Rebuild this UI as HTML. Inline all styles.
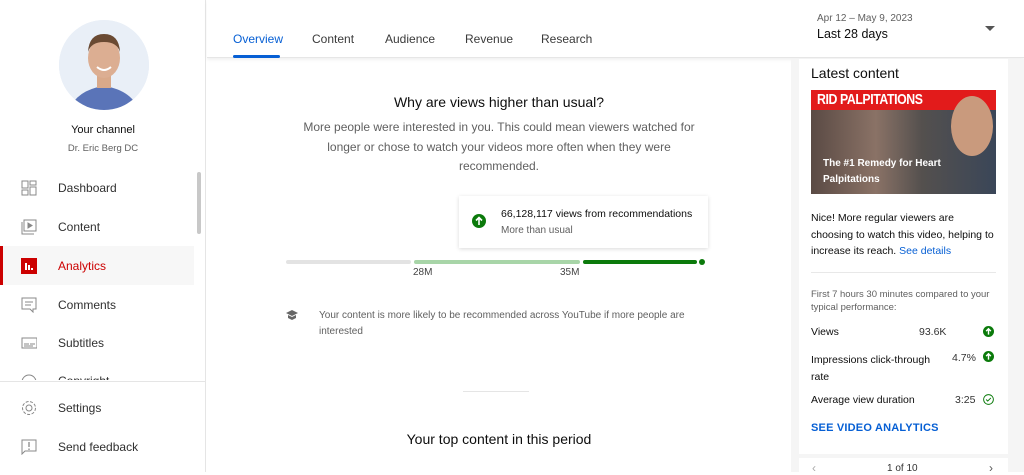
<!DOCTYPE html>
<html><head><style>
*{box-sizing:border-box;margin:0;padding:0}
body{width:1024px;height:472px;overflow:hidden;background:#fff;font-family:"Liberation Sans",Roboto,sans-serif;color:#0d0d0d;position:relative}
.side{position:absolute;left:0;top:0;width:206px;height:472px;border-right:1px solid #e5e5e5;background:#fff}
.av{position:absolute;left:59px;top:20px;width:90px;height:90px;border-radius:50%;background:#e8eef6;overflow:hidden}
.nav{position:absolute;left:0;width:194px;height:39px;display:flex;align-items:center;font-size:12px;color:#303030}
.nav .ic{position:absolute;left:21px;top:12px;width:16px;height:16px}
.nav span{position:absolute;left:58px}
.tabs{position:absolute;left:207px;top:0;width:817px;height:58px;border-bottom:1px solid #e6e6e6;box-shadow:0 2px 3px rgba(0,0,0,.06);background:#fff}
.tab{position:absolute;top:32px;font-size:12px;color:#3a3a3a}
.right{position:absolute;left:791px;top:59px;width:233px;height:413px;background:#f5f5f5}
.card{position:absolute;left:799px;top:59px;width:209px;height:395px;background:#fff}
.c{position:absolute;font-size:11px;color:#0d0d0d}
</style></head><body>
<div class="side">
 <div class="av"><svg width="90" height="90"><rect width="90" height="90" fill="#e9eff7"/><path d="M10 90 Q18 70 45 66 Q72 70 80 90Z" fill="#5a74b8"/><rect x="38" y="52" width="14" height="16" fill="#d9a98a"/><ellipse cx="45" cy="38" rx="16" ry="20" fill="#dcae92"/><path d="M29 32 Q30 14 45 14 Q60 14 61 32 Q58 22 45 22 Q32 22 29 32Z" fill="#6a4a33"/><path d="M38 47 Q45 53 52 47" stroke="#fff" stroke-width="2" fill="none"/></svg></div>
 <div style="position:absolute;top:124px;width:206px;text-align:center;font-size:11px;color:#0d0d0d">Your channel</div>
 <div style="position:absolute;top:143px;width:206px;text-align:center;font-size:9.5px;color:#606060">Dr. Eric Berg DC</div>
 <div style="position:absolute;left:197px;top:172px;width:4px;height:62px;border-radius:2px;background:#c8c8c8"></div>
 <div class="nav" style="top:168px"><svg class="ic" viewBox="0 0 16 16" fill="none" stroke="#888"><rect x="1" y="1" width="6" height="7"/><rect x="9" y="1" width="6" height="4"/><rect x="1" y="10" width="6" height="5"/><rect x="9" y="7" width="6" height="8"/></svg><span>Dashboard</span></div>
 <div class="nav" style="top:207px"><svg class="ic" viewBox="0 0 16 16" fill="none" stroke="#888"><rect x="3" y="1" width="12" height="11"/><path d="M1 3v12h12"/><path d="M7 4l4 2.5L7 9z" fill="#888"/></svg><span>Content</span></div>
 <div class="nav" style="top:246px;background:#f7f7f7;"><div style="position:absolute;left:0;top:0;width:3px;height:39px;background:#cc0000"></div><svg class="ic" viewBox="0 0 16 16"><rect width="16" height="16" fill="#cc0000"/><rect x="4" y="5" width="2" height="7" fill="#fff"/><rect x="7" y="7" width="2" height="5" fill="#fff"/><rect x="10" y="10" width="2" height="2" fill="#fff"/></svg><span style="color:#cc0000">Analytics</span></div>
 <div class="nav" style="top:285px"><svg class="ic" viewBox="0 0 16 16" fill="none" stroke="#888"><path d="M1 1h14v11H12v3l-3-3H1z"/><path d="M4 5h8M4 8h6"/></svg><span>Comments</span></div>
 <div class="nav" style="top:323px"><svg class="ic" viewBox="0 0 16 16" fill="none" stroke="#888"><rect x="1" y="3" width="15" height="10"/><path d="M3 9h5M9 9h5M3 11h9"/></svg><span>Subtitles</span></div>
 <div class="nav" style="top:362px;height:18px;overflow:hidden"><svg class="ic" viewBox="0 0 16 16" fill="none" stroke="#888"><circle cx="8" cy="8" r="7"/></svg><span style="top:12px">Copyright</span></div>
 <div style="position:absolute;left:0;top:381px;width:206px;border-top:1px solid #e5e5e5"></div>
 <div class="nav" style="top:388px"><svg class="ic" viewBox="0 0 16 16" fill="none" stroke="#888"><circle cx="8" cy="8" r="3"/><circle cx="8" cy="8" r="6.5" stroke-dasharray="3 1.5"/></svg><span>Settings</span></div>
 <div class="nav" style="top:427px"><svg class="ic" viewBox="0 0 16 16" fill="none" stroke="#888"><path d="M1 1h14v11H4l-3 3z"/><path d="M8 3v5M8 9.5v1.5" stroke="#666"/></svg><span>Send feedback</span></div>
</div>
<div class="tabs">
 <div class="tab" style="left:26px;color:#065fd4">Overview</div>
 <div style="position:absolute;left:26px;top:55px;width:47px;height:3px;background:#065fd4;border-radius:2px"></div>
 <div class="tab" style="left:105px">Content</div>
 <div class="tab" style="left:178px">Audience</div>
 <div class="tab" style="left:258px">Revenue</div>
 <div class="tab" style="left:334px">Research</div>
 <div style="position:absolute;left:610px;top:13px;font-size:10px;color:#606060">Apr 12 – May 9, 2023</div>
 <div style="position:absolute;left:610px;top:27px;font-size:12.5px;color:#0d0d0d">Last 28 days</div>
 <div style="position:absolute;left:778px;top:26px;border-left:5px solid transparent;border-right:5px solid transparent;border-top:5px solid #555"></div>
</div>
<div style="position:absolute;left:207px;top:94px;width:584px;text-align:center;font-size:14px;color:#0d0d0d">Why are views higher than usual?</div>
<div style="position:absolute;left:290px;top:118px;width:418px;text-align:center;font-size:12px;line-height:19.5px;color:#606060">More people were interested in you. This could mean viewers watched for longer or chose to watch your videos more often when they were recommended.</div>
<div style="position:absolute;left:459px;top:196px;width:249px;height:52px;background:#fff;box-shadow:0 1px 4px rgba(0,0,0,.15)"></div>
<svg style="position:absolute;left:472px;top:214px" width="14" height="14" viewBox="0 0 14 14"><circle cx="7" cy="7" r="7" fill="#0b7a0b"/><path d="M7 11V4M4 6.5L7 3.5l3 3" stroke="#fff" stroke-width="1.6" fill="none"/></svg>
<div style="position:absolute;left:501px;top:208px;font-size:10.5px;color:#0d0d0d">66,128,117 views from recommendations</div>
<div style="position:absolute;left:501px;top:225px;font-size:10px;color:#606060">More than usual</div>
<div style="position:absolute;left:286px;top:260px;width:125px;height:4px;background:#e3e3e3;border-radius:2px"></div>
<div style="position:absolute;left:414px;top:260px;width:166px;height:4px;background:#a8d5a8;border-radius:2px"></div>
<div style="position:absolute;left:583px;top:260px;width:114px;height:4px;background:#0b7a0b;border-radius:2px"></div>
<div style="position:absolute;left:699px;top:259px;width:6px;height:6px;background:#0b7a0b;border-radius:50%"></div>
<div style="position:absolute;left:413px;top:267px;font-size:10px;color:#444">28M</div>
<div style="position:absolute;left:560px;top:267px;font-size:10px;color:#444">35M</div>
<svg style="position:absolute;left:285px;top:309px" width="14" height="12" viewBox="0 0 14 12"><path d="M7 1L1 4l6 3 6-3z M3 6v3l4 2 4-2V6L7 8z" fill="#666"/></svg>
<div style="position:absolute;left:319px;top:308px;width:400px;font-size:10px;line-height:16px;color:#606060">Your content is more likely to be recommended across YouTube if more people are interested</div>
<div style="position:absolute;left:463px;top:391px;width:66px;border-top:1px solid #e5e5e5"></div>
<div style="position:absolute;left:207px;top:431px;width:584px;text-align:center;font-size:14px;color:#0d0d0d">Your top content in this period</div>
<div class="right"></div>
<div class="card"></div>
<div class="c" style="left:811px;top:65px;font-size:14px">Latest content</div>
<div style="position:absolute;left:811px;top:90px;width:185px;height:104px;background:linear-gradient(90deg,#5a4a44,#8a7266 35%,#54504e 60%,#3a4658);overflow:hidden">
 <div style="position:absolute;left:0;top:0;width:185px;height:20px;background:#e21b1b"></div>
 <div style="position:absolute;left:6px;top:1px;font-size:15px;font-weight:bold;color:#fff;letter-spacing:-.5px;transform:scaleX(.82);transform-origin:left">RID PALPITATIONS</div>
 <div style="position:absolute;left:140px;top:6px;width:42px;height:60px;border-radius:50%;background:#c99a7d"></div>
 <div style="position:absolute;left:12px;top:66px;font-size:10px;font-weight:bold;color:#fff;line-height:16px">The #1 Remedy for Heart<br>Palpitations</div>
</div>
<div class="c" style="left:811px;top:210px;width:185px;font-size:10.5px;line-height:16.5px">Nice! More regular viewers are choosing to watch this video, helping to increase its reach. <span style="color:#065fd4">See details</span></div>
<div style="position:absolute;left:811px;top:272px;width:185px;border-top:1px solid #e8e8e8"></div>
<div class="c" style="left:811px;top:288px;width:185px;font-size:9.5px;line-height:13px;color:#606060">First 7 hours 30 minutes compared to your typical performance:</div>
<div class="c" style="left:811px;top:326px;font-size:10.5px">Views</div>
<div class="c" style="left:919px;top:326px;font-size:10.5px;color:#333">93.6K</div>
<div class="c" style="left:811px;top:352px;width:125px;font-size:10.5px;line-height:17px">Impressions click-through rate</div>
<div class="c" style="left:952px;top:352px;font-size:10.5px;color:#333">4.7%</div>
<div class="c" style="left:811px;top:394px;font-size:10.5px">Average view duration</div>
<div class="c" style="left:955px;top:394px;font-size:10.5px;color:#333">3:25</div>
<svg style="position:absolute;left:983px;top:326px" width="11" height="11" viewBox="0 0 14 14"><circle cx="7" cy="7" r="7" fill="#0b7a0b"/><path d="M7 11V4M4 6.5L7 3.5l3 3" stroke="#fff" stroke-width="1.8" fill="none"/></svg>
<svg style="position:absolute;left:983px;top:351px" width="11" height="11" viewBox="0 0 14 14"><circle cx="7" cy="7" r="7" fill="#0b7a0b"/><path d="M7 11V4M4 6.5L7 3.5l3 3" stroke="#fff" stroke-width="1.8" fill="none"/></svg>
<svg style="position:absolute;left:983px;top:394px" width="11" height="11" viewBox="0 0 14 14"><circle cx="7" cy="7" r="6.2" fill="none" stroke="#0b7a0b" stroke-width="1.2"/><path d="M4 7l2 2 4-4" stroke="#0b7a0b" stroke-width="1.3" fill="none"/></svg>
<div class="c" style="left:811px;top:422px;font-size:11px;color:#065fd4;font-weight:bold;letter-spacing:.2px">SEE VIDEO ANALYTICS</div>
<div style="position:absolute;left:799px;top:458px;width:209px;height:14px;background:#fff"></div>
<div class="c" style="left:887px;top:463px;font-size:10px;color:#333">1 of 10</div>
<div class="c" style="left:812px;top:461px;font-size:12px;color:#aaa">‹</div>
<div class="c" style="left:989px;top:461px;font-size:12px;color:#555">›</div>
</body></html>
